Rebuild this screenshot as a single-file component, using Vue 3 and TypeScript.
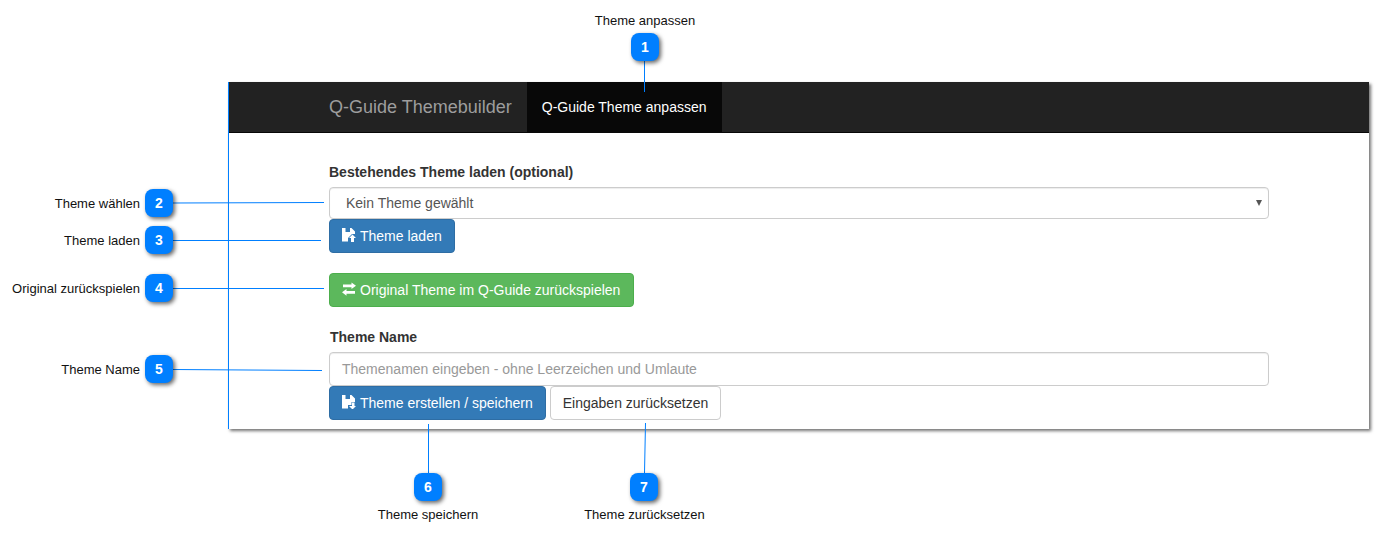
<template>
  <div class="canvas">
    <section class="window">
      <nav class="navbar">
        <span class="brand">Q-Guide Themebuilder</span>
        <a class="tab">Q-Guide Theme anpassen</a>
      </nav>
      <div class="content">
        <label class="field-label">Bestehendes Theme laden (optional)</label>
        <div class="select">
          <span>Kein Theme gewählt</span>
          <i class="caret"></i>
        </div>
        <div class="row">
          <button class="btn btn-primary">
            <svg class="ico" viewBox="0 0 14 14"><path fill="#fff" :d="floppyOpen" /></svg>
            Theme laden
          </button>
        </div>
        <div class="row row-green">
          <button class="btn btn-success">
            <svg class="ico" viewBox="0 0 14 14"><path fill="#fff" :d="transfer" /></svg>
            Original Theme im Q-Guide zurückspielen
          </button>
        </div>
        <label class="field-label name-label">Theme Name</label>
        <div class="input">Themenamen eingeben - ohne Leerzeichen und Umlaute</div>
        <div class="row row-gap">
          <button class="btn btn-primary">
            <svg class="ico" viewBox="0 0 14 14"><path fill="#fff" :d="floppySave" /></svg>
            Theme erstellen / speichern
          </button>
          <button class="btn btn-default">Eingaben zurücksetzen</button>
        </div>
      </div>
    </section>

    <svg class="lines" width="1378" height="538">
      <line v-for="(l, i) in lines" :key="i" :x1="l[0]" :y1="l[1]" :x2="l[2]" :y2="l[3]" />
    </svg>

    <div v-for="c in callouts" :key="c.n" class="badge" :style="{ left: c.x + 'px', top: c.y + 'px' }">{{ c.n }}</div>
    <span
      v-for="c in callouts"
      :key="'t' + c.n"
      class="caption"
      :class="c.side"
      :style="{ left: c.tx + 'px', top: c.ty + 'px' }"
    >{{ c.text }}</span>
  </div>
</template>

<script setup lang="ts">
interface Callout {
  n: number
  x: number
  y: number
  tx: number
  ty: number
  side: 'left' | 'center'
  text: string
}

const callouts: Callout[] = [
  { n: 1, x: 631, y: 33, tx: 645, ty: 13, side: 'center', text: 'Theme anpassen' },
  { n: 2, x: 145, y: 189, tx: 140, ty: 196, side: 'left', text: 'Theme wählen' },
  { n: 3, x: 145, y: 226, tx: 140, ty: 233, side: 'left', text: 'Theme laden' },
  { n: 4, x: 145, y: 274, tx: 140, ty: 281, side: 'left', text: 'Original zurückspielen' },
  { n: 5, x: 145, y: 355, tx: 140, ty: 362, side: 'left', text: 'Theme Name' },
  { n: 6, x: 414, y: 473, tx: 428, ty: 507, side: 'center', text: 'Theme speichern' },
  { n: 7, x: 630, y: 473, tx: 644.5, ty: 507, side: 'center', text: 'Theme zurücksetzen' },
]

const lines: number[][] = [
  [644.5, 61, 644.5, 92],
  [173, 203, 324, 202.5],
  [173, 240.5, 321, 240.5],
  [173, 288.5, 324, 288.5],
  [173, 369.5, 322, 370.5],
  [428.5, 424, 428.5, 473],
  [645.5, 423, 644.5, 473],
]

const floppyOpen =
  'M0 0h3.500v4H8V0h1.500L13 3.500V6h-3L6 10v3.500H0zM10.500 6.500L14 10h-2v4H9v-4H7z'
const floppySave =
  'M0 0h3.500v4H8V0h1.500L13 3.500V7H9.500V10H6v3.500H0zM10 7.500h2.500V11H14l-3.500 3.500L7 11h3z'
const transfer =
  'M9.500 0.500L14 3.800 9.500 7V5.200H1V2.500h8.500zM4.500 7v2h8.500v2.700H4.500v2L0 10.300z'
</script>

<style scoped>
.canvas {
  position: relative;
  width: 1378px;
  height: 538px;
  overflow: hidden;
  background: #fff;
  font-family: 'Liberation Sans', Arial, sans-serif;
  font-size: 14px;
  color: #333;
}

.window {
  position: absolute;
  left: 228px;
  top: 82px;
  width: 1141px;
  height: 347px;
  box-sizing: border-box;
  border-left: 1px solid #007fff;
  background: #fff;
  box-shadow: 2px 2px 3px rgba(0, 0, 0, 0.55);
}

.navbar {
  display: flex;
  height: 51px;
  box-sizing: border-box;
  padding-left: 100px;
  background: #222;
  border-bottom: 1px solid #080808;
}

.brand {
  font-size: 18px;
  line-height: 50px;
  color: #9d9d9d;
  margin-right: 15px;
}

.tab {
  padding: 0 15px;
  line-height: 50px;
  background: #080808;
  color: #fff;
}

.content {
  display: flex;
  flex-direction: column;
  align-items: flex-start;
  padding: 29px 0 0 100px;
  width: 940px;
}

.field-label {
  font-weight: 700;
  line-height: 20px;
  margin-bottom: 5px;
  height: 20px;
}

.name-label {
  margin-top: 20px;
  margin-left: 1px;
}

.select,
.input {
  width: 940px;
  box-sizing: border-box;
  background: #fff;
  border: 1px solid #ccc;
  border-radius: 4px;
  box-shadow: inset 0 1px 1px rgba(0, 0, 0, 0.075);
  display: flex;
  align-items: center;
  color: #555;
}

.select {
  height: 32px;
  padding: 0 6px 0 16px;
  justify-content: space-between;
}

.caret {
  width: 0;
  height: 0;
  border-left: 3px solid transparent;
  border-right: 3px solid transparent;
  border-top: 6px solid #555;
}

.input {
  height: 34px;
  padding: 0 12px;
  color: #999;
}

.row {
  display: flex;
}

.row-green {
  margin-top: 20px;
}

.row-gap {
  gap: 4px;
}

.btn {
  display: inline-flex;
  align-items: center;
  height: 34px;
  box-sizing: border-box;
  padding: 0 12px;
  border: 1px solid transparent;
  border-radius: 4px;
  font: inherit;
}

.btn-primary {
  background: #337ab7;
  border-color: #2e6da4;
  color: #fff;
}

.btn-success {
  background: #5cb85c;
  border-color: #4cae4c;
  color: #fff;
  padding-right: 13px;
}

.btn-default {
  background: #fff;
  border-color: #ccc;
  color: #333;
}

.ico {
  width: 14px;
  height: 14px;
  margin-right: 4px;
  margin-top: -3px;
}

.lines {
  position: absolute;
  left: 0;
  top: 0;
  pointer-events: none;
}

.lines line {
  stroke: #007fff;
  stroke-width: 1;
}

.badge {
  position: absolute;
  width: 28px;
  height: 28px;
  border-radius: 8px;
  background: #007fff;
  color: #fff;
  font-size: 14px;
  font-weight: 700;
  line-height: 28px;
  text-align: center;
  box-shadow: 2px 2px 4px rgba(0, 0, 0, 0.6);
}

.caption {
  position: absolute;
  font-size: 13px;
  line-height: 15px;
  color: #111;
  white-space: nowrap;
}

.caption.left {
  transform: translateX(-100%);
}

.caption.center {
  transform: translateX(-50%);
}
</style>

<style>
html,
body {
  margin: 0;
  background: #fff;
}
</style>
